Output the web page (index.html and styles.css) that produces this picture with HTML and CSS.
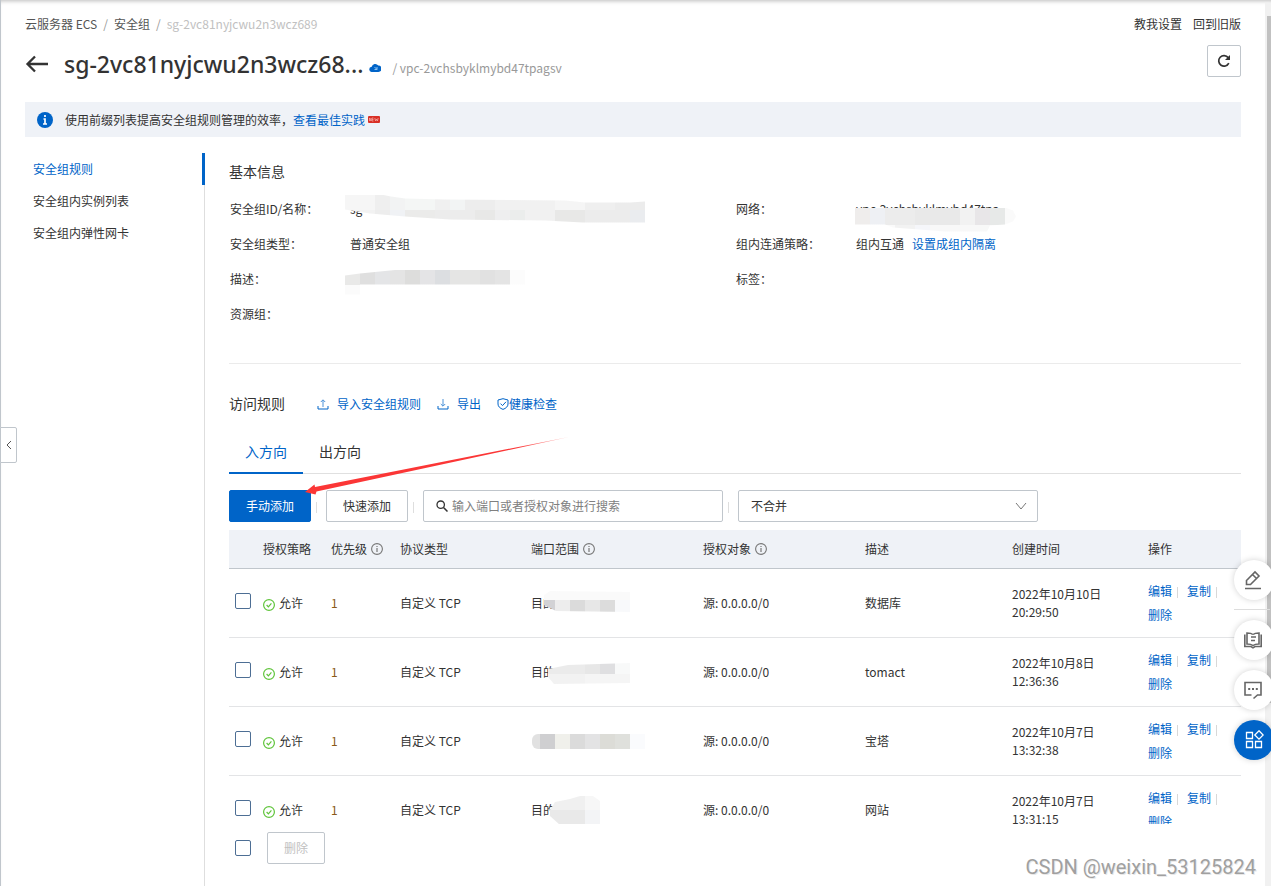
FILE: index.html
```html
<!DOCTYPE html>
<html lang="zh-CN">
<head>
<meta charset="utf-8">
<title>安全组规则</title>
<link rel="stylesheet" href="styles.css">
</head>
<body>
<svg class="sprite" aria-hidden="true">
  <symbol id="info" viewBox="0 0 12 12"><circle cx="6" cy="6" r="5.4" fill="none" stroke="#777" stroke-width="1.1"/><path d="M6 5v4M6 2.9v1.2" stroke="#777" stroke-width="1.2"/></symbol>
  <symbol id="ok" viewBox="0 0 12 12"><circle cx="6" cy="6" r="5.4" fill="none" stroke="#5fc43a" stroke-width="1.2"/><path d="M3.6 6l1.8 1.9 3-3.5" fill="none" stroke="#5fc43a" stroke-width="1.2"/></symbol>
</svg>
<div class="app">
  <header class="top">
    <nav class="crumbs" aria-label="路径">
      <a href="#">云服务器 ECS</a><span class="slash">/</span><a href="#">安全组</a><span class="slash">/</span><span class="current">sg-2vc81nyjcwu2n3wcz689</span>
    </nav>
    <div class="top-links"><a href="#">教我设置</a><a href="#">回到旧版</a></div>
  </header>
  <div class="title-row">
    <a class="back" href="#" aria-label="返回"><svg width="24" height="18" viewBox="0 0 24 18"><path d="M23 9H3M10 1.500L2.500 9l7.500 7.500" fill="none" stroke="#333" stroke-width="2.300"/></svg></a>
    <h1>sg-2vc81nyjcwu2n3wcz68...</h1>
    <svg class="cloud" width="12" height="9" viewBox="0 0 12 9"><path d="M3 9a2.600 2.600 0 0 1-.3-5.200A3.600 3.600 0 0 1 9.200 2.600 3.200 3.200 0 0 1 9.400 9z" fill="#0064c8"/><path d="M5.500 4l2.500 2.500M8 4v2.500H5.500" stroke="#8fc4f2" fill="none"/></svg>
    <span class="vpc">/ vpc-2vchsbyklmybd47tpagsv</span>
    <button class="refresh" type="button" aria-label="刷新"><svg width="14" height="14" viewBox="0 0 14 14"><path d="M11.800 9.200A5.300 5.300 0 1 1 11.200 3.600" fill="none" stroke="#333" stroke-width="1.700"/><path d="M13 1v5H8z" fill="#333"/></svg></button>
  </div>
  <div class="notice">
    <svg width="16" height="16" viewBox="0 0 16 16"><circle cx="8" cy="8" r="8" fill="#0064c8"/><path d="M8 3v2M6.500 7H8v5M6 12h4" fill="none" stroke="#fff" stroke-width="1.700"/></svg>
    <p>使用前缀列表提高安全组规则管理的效率，<a href="#">查看最佳实践</a></p>
    <svg class="new" width="12" height="7" viewBox="0 0 12 7"><rect width="12" height="7" rx="1" fill="#d93026"/><path d="M1.500 5V2l1.500 3V2M5.500 2H4v3h1.500M4 3.500h1.500M6.800 2l.8 3 .9-2 .9 2 .8-3" fill="none" stroke="#f5b5ae" stroke-width=".7"/></svg>
  </div>
  <div class="body">
    <nav class="side" aria-label="安全组">
      <a class="active" href="#">安全组规则</a>
      <a href="#">安全组内实例列表</a>
      <a href="#">安全组内弹性网卡</a>
    </nav>
    <main>
      <h2 class="info-title">基本信息</h2>
      <dl class="info">
        <div><dt>安全组ID/名称：</dt><dd class="covered">sg<i class="mask mask-id"></i></dd></div>
        <div><dt>网络：</dt><dd class="covered">vpc-2vchsbyklmybd47tpa<i class="mask mask-net"></i></dd></div>
        <div><dt>安全组类型：</dt><dd>普通安全组</dd></div>
        <div><dt>组内连通策略：</dt><dd>组内互通<a class="isolate" href="#">设置成组内隔离</a></dd></div>
        <div><dt>描述：</dt><dd class="covered"><i class="mask mask-desc"></i></dd></div>
        <div><dt>标签：</dt><dd></dd></div>
        <div><dt>资源组：</dt><dd></dd></div>
      </dl>
      <div class="rules-head">
        <h2>访问规则</h2>
        <a class="import" href="#"><svg width="12" height="12" viewBox="0 0 12 12"><path d="M1 8v3h10V8" fill="none" stroke="#0064c8"/><path d="M6 9V2M3.800 4L6 1.800 8.200 4" fill="none" stroke="#4c92d8"/></svg>导入安全组规则</a>
        <a class="export" href="#"><svg width="12" height="12" viewBox="0 0 12 12"><path d="M1 8v3h10V8" fill="none" stroke="#0064c8"/><path d="M6 1v7M3.800 6L6 8.200 8.200 6" fill="none" stroke="#4c92d8"/></svg>导出</a>
        <a class="health" href="#"><svg width="12" height="12" viewBox="0 0 12 12"><path d="M6 .7l5 1.300v4c0 2.500-2 4.300-5 5.400C3 10.300 1 8.500 1 6V2zM3.500 5.600l2 2 3.500-3.800" fill="none" stroke="#0064c8"/></svg>健康检查</a>
      </div>
      <div class="tabs" role="tablist">
        <button type="button" role="tab" aria-selected="true" class="active">入方向</button>
        <button type="button" role="tab" aria-selected="false">出方向</button>
        <svg class="arrow" width="264" height="60" viewBox="0 0 264 60"><defs><linearGradient id="fade"><stop offset="0" stop-color="#fb3636"/><stop offset=".8" stop-color="#fb3636"/><stop offset="1" stop-color="#fb3636" stop-opacity=".4"/></linearGradient></defs><path d="M0 55L9.500 47.500 10 50 264 0 11.500 54.500 10.500 57.500z" fill="url(#fade)"/></svg>
      </div>
      <div class="toolbar">
        <button class="btn primary" type="button">手动添加</button><span class="sep"></span>
        <button class="btn" type="button">快速添加</button><span class="sep"></span>
        <label class="search"><svg width="12" height="12" viewBox="0 0 12 12"><circle cx="4.700" cy="4.700" r="3.700" fill="none" stroke="#333" stroke-width="1.300"/><path d="M7.500 7.500l4 4" stroke="#333" stroke-width="1.500"/></svg><input type="text" placeholder="输入端口或者授权对象进行搜索" aria-label="搜索"></label><span class="sep"></span>
        <label class="merge"><select aria-label="合并方式"><option>不合并</option></select><svg width="12" height="8" viewBox="0 0 12 8"><path d="M1 1l5 6 5-6" fill="none" stroke="#777"/></svg></label>
      </div>
      <div class="table-wrap">
        <table>
          <colgroup><col class="c-check"><col class="c-policy"><col class="c-prio"><col class="c-proto"><col class="c-port"><col class="c-source"><col class="c-desc"><col class="c-time"><col></colgroup>
          <thead><tr><th></th><th>授权策略</th><th>优先级<svg class="i"><use href="#info"/></svg></th><th>协议类型</th><th>端口范围<svg class="i"><use href="#info"/></svg></th><th>授权对象<svg class="i"><use href="#info"/></svg></th><th>描述</th><th>创建时间</th><th>操作</th></tr></thead>
          <tbody>
            <tr><td><input type="checkbox" aria-label="选择数据库"></td><td><svg class="ok"><use href="#ok"/></svg>允许</td><td class="prio">1</td><td>自定义 TCP</td><td><div class="covered">目的<i class="mask mask-p1"></i></div></td><td>源: 0.0.0.0/0</td><td>数据库</td><td class="time">2022年10月10日<br>20:29:50</td><td class="ops"><a href="#">编辑</a><a href="#">复制</a><br><a href="#">删除</a></td></tr>
            <tr><td><input type="checkbox" aria-label="选择tomact"></td><td><svg class="ok"><use href="#ok"/></svg>允许</td><td class="prio">1</td><td>自定义 TCP</td><td><div class="covered">目的<i class="mask mask-p2"></i></div></td><td>源: 0.0.0.0/0</td><td>tomact</td><td class="time">2022年10月8日<br>12:36:36</td><td class="ops"><a href="#">编辑</a><a href="#">复制</a><br><a href="#">删除</a></td></tr>
            <tr><td><input type="checkbox" aria-label="选择宝塔"></td><td><svg class="ok"><use href="#ok"/></svg>允许</td><td class="prio">1</td><td>自定义 TCP</td><td><div class="covered"><i class="mask mask-p3"></i></div></td><td>源: 0.0.0.0/0</td><td>宝塔</td><td class="time">2022年10月7日<br>13:32:38</td><td class="ops"><a href="#">编辑</a><a href="#">复制</a><br><a href="#">删除</a></td></tr>
            <tr><td><input type="checkbox" aria-label="选择网站"></td><td><svg class="ok"><use href="#ok"/></svg>允许</td><td class="prio">1</td><td>自定义 TCP</td><td><div class="covered">目的<i class="mask mask-p4"></i></div></td><td>源: 0.0.0.0/0</td><td>网站</td><td class="time">2022年10月7日<br>13:31:15</td><td class="ops"><a href="#">编辑</a><a href="#">复制</a><br><a href="#">删除</a></td></tr>
          </tbody>
        </table>
      </div>
      <div class="batch"><input type="checkbox" aria-label="全选"><button class="btn" type="button" disabled>删除</button></div>
    </main>
  </div>
</div>
<button class="drawer" type="button" aria-label="展开"><svg width="6" height="10" viewBox="0 0 6 10"><path d="M5 1L1 5l4 4" fill="none" stroke="#555"/></svg></button>
<div class="scroll" aria-hidden="true"><div class="thumb"></div></div>
<aside class="float">
  <button type="button" aria-label="编辑"><svg width="20" height="20" viewBox="0 0 20 20"><path d="M2 18.500h16M3.500 14.500v-4l8.500-8.500 4 4-8.500 8.500zM9.500 4.500l4 4" fill="none" stroke="#666" stroke-width="1.600"/></svg></button>
  <hr>
  <button type="button" aria-label="文档"><svg width="20" height="20" viewBox="0 0 20 20"><path d="M10 4.500C8.500 3.200 6.500 3 4 3v11c2.500 0 4.500.3 6 1.500 1.500-1.200 3.500-1.500 6-1.500V3c-2.500 0-4.500.2-6 1.500M1.800 4.500v12h6.200l2 1.300 2-1.300h6.200v-12M8 7h5M8 10.500h4" fill="none" stroke="#666" stroke-width="1.600"/></svg></button>
  <button type="button" aria-label="反馈"><svg width="20" height="20" viewBox="0 0 20 20"><path d="M8.500 15H2V2.500h16V15h-3.500l-4 3.500" fill="none" stroke="#666" stroke-width="1.600"/><path d="M5.200 9h2M9 9h2M12.800 9h2" stroke="#666" stroke-width="2"/></svg></button>
  <button class="blue" type="button" aria-label="应用"><svg width="20" height="20" viewBox="0 0 20 20"><path d="M2.500 2.500h6v6h-6zM2.500 11.500h6v6h-6zM11.500 11.500h6v6h-6zM15 .8l4.200 4.200L15 9.200 10.800 5z" fill="none" stroke="#fff" stroke-width="1.300"/></svg></button>
</aside>
<div class="watermark">CSDN @weixin_53125824</div>
</body>
</html>
```
FILE: styles.css
```css
* { box-sizing: border-box; }
body {
  margin: 0;
  overflow: hidden;
  background: #fff;
  color: #333;
  font: 12px/18px "Noto Sans CJK SC", "Noto Sans", sans-serif;
}
a { color: #0064c8; text-decoration: none; }
h1, h2, p, dl, dd { margin: 0; font-weight: 400; }
button, input, select { font: inherit; color: inherit; }
.sprite { position: absolute; width: 0; height: 0; }

.app {
  display: flex;
  flex-direction: column;
  height: 100vh;
  padding: 15px 30px 0 24px;
  border-left: 1px solid #c0c6cc;
  box-shadow: inset 0 4px 4px -3px #bbb;
}
.top { display: flex; justify-content: space-between; }
.crumbs a { color: #555; }
.crumbs .slash { margin: 0 6px; color: #999; }
.crumbs .current { color: #c1c1c1; }
.top-links { display: flex; gap: 11px; }
.top-links a { color: #333; }

.title-row { display: flex; align-items: center; height: 32px; margin-top: 12px; }
.back { display: flex; margin: 6px 15px 0 0; }
.title-row h1 {
  padding-top: 6px;
  font: 500 23px/32px "Noto Sans", "Noto Sans CJK SC", sans-serif;
}
.cloud { margin: 12px 11px 0 6px; }
.vpc { color: #999; margin-top: 14px; }
.refresh {
  display: flex; align-items: center; justify-content: center;
  width: 34px; height: 32px; margin-left: auto; padding: 0;
  background: #fff; border: 1px solid #c0c6cc; border-radius: 2px;
}

.notice {
  display: flex; align-items: center;
  min-height: 35px; margin-top: 25px; padding-left: 12px;
  background: #eff2f7;
}
.notice p { margin-left: 12px; }
.new { margin-left: 3px; }

.body { display: flex; flex: 1; min-height: 0; }
.side { width: 180px; flex: none; margin-top: 16px; border-right: 1px solid #dedede; }
.side a { display: block; padding-left: 8px; line-height: 32px; color: #333; }
.side .active { color: #0064c8; border-right: 3px solid #0064c8; margin-right: -1px; }
main { flex: 1; min-width: 0; display: flex; flex-direction: column; padding: 24px 0 22px 24px; }
h2, .tabs button { font-family: "Noto Sans", "Noto Sans CJK SC", sans-serif; }
h2 { font-size: 14px; line-height: 22px; }

.info {
  display: grid; grid-template-columns: 1fr 1fr;
  margin-top: 8px; padding-bottom: 32px;
  border-bottom: 1px solid #ebebeb;
}
.info > div { display: flex; height: 35px; align-items: center; }
.info dt { width: 121px; flex: none; padding-left: 1px; }
.covered { position: relative; min-height: 18px; }
.isolate { margin-left: 8px; }
.mask { position: absolute; background-repeat: no-repeat; }
.mask-id {
  left: -5px; top: -5px; width: 300px; height: 28px;
  background-image:
    linear-gradient(90deg, #f6f6f6 30px, #efefef 0 45px, #f2f3f3 0 60px, #f4f6f5 0 90px, #f0f0f0 0 105px, #f2f4f4 0 120px, #ededed 0 150px, #f1f1f1 0 210px, #f5f5f5 0 240px, #efefef 0 270px, #ececec 0),
    linear-gradient(90deg, #f2f2f2 30px, #ededed 0 45px, #f0f2f5 0 60px, #ebebea 0 90px, #ececec 0 130px, #e8e8e7 0 150px, #eeeeef 0 165px, #ebedec 0 180px, #f1f1f1 0 210px, #e8e8e7 0 240px, #ececec 0 285px, #eaecef 0);
  background-size: 100% 15px, 100% 13px;
  background-position: 0 0, 0 15px;
  clip-path: polygon(0 0, 36px 0, 46px 2px, 60px 4px, 100px 5px, 220px 6px, 240px 8px, 285px 8px, 300px 7px, 300px 28px, 238px 28px, 200px 26px, 105px 25px, 60px 22px, 25px 19px, 0 15px);
}
.mask-net {
  left: -1px; top: 8px; width: 161px; height: 24px;
  background-image:
    linear-gradient(90deg, #efedec 15px, #eef0f4 0 30px, #ececec 0 60px, #e9e9e9 0 105px, #f2f2f2 0 120px, #e8e6e8 0 135px, #e7e9e8 0 150px, #fafafa 0),
    linear-gradient(90deg, #fafafa 40px, #f2f2f2 0 60px, #f5f6fa 0 75px, #f8f8f8 0);
  background-size: 100% 17px, 100% 7px;
  background-position: 0 0, 0 17px;
  clip-path: polygon(0 0, 150px 0, 158px 3px, 161px 9px, 158px 14px, 150px 17px, 135px 18px, 132px 24px, 90px 24px, 38px 20px, 30px 17px, 0 17px);
}
.mask-desc {
  left: -5px; top: 0; width: 180px; height: 25px;
  background-image:
    linear-gradient(90deg, #e9e9e8 15px, #dfdfdf 0 30px, #e4e5e7 0 45px, #e4e4e4 0 60px, #dddddc 0 75px, #e4e4e6 0 90px, #dcdee1 0 105px, #e5e5e4 0 135px, #e1e1e1 0 150px, #e4e4e4 0 165px, #fcfcfc 0),
    linear-gradient(90deg, #fbfbfb 15px, #fff 0);
  background-size: 100% 15px, 100% 10px;
  background-position: 0 0, 0 15px;
  clip-path: polygon(0 6px, 15px 4px, 55px 0, 180px 0, 180px 15px, 15px 15px, 15px 25px, 0 25px);
}
.mask-p1 {
  left: 13px; top: -3px; width: 86px; height: 21px;
  background-image: linear-gradient(#fafafa, #fafafa), linear-gradient(90deg, #d2d2d5 11px, #ededed 0 26px, #dbdbdb 0 41px, #e7e7e7 0 56px, #dcdcdc 0 71px, #f8f9fb 0);
  background-size: 100% 9px, 100% 12px;
  background-position: 0 0, 0 9px;
  clip-path: polygon(0 4px, 6px 0, 86px 1px, 86px 21px, 12px 20px, 0 14px);
}
.mask-p2 {
  left: 17px; top: 0; width: 82px; height: 21px;
  background-image: linear-gradient(90deg, #ebebeb 37px, #e7e7e7 0 52px, #dfdfe1 0 67px, #f8f9f9 0), linear-gradient(90deg, #f2f2f2 37px, #f5f5f5 0);
  background-size: 100% 11px, 100% 10px;
  background-position: 0 0, 0 11px;
  clip-path: polygon(0 6px, 20px 2px, 82px 0, 82px 20px, 6px 21px, 0 14px);
}
.mask-p3 {
  left: 1px; top: 2px; width: 113px; height: 15px;
  background-image: linear-gradient(90deg, #e1e1e1 8px, #cfcfd1 0 23px, #f0f0eb 0 38px, #dbdbdb 0 53px, #e3e3e4 0 68px, #dcdcd7 0 83px, #dfe0dc 0 98px, #fafbfd 0);
  border-radius: 6px 0 0 6px;
}
.mask-p4 {
  left: 19px; top: -5px; width: 50px; height: 29px;
  background-image: linear-gradient(90deg, #f0f0f0 35px, #f7f7f7 0), linear-gradient(90deg, #e9e9e9 35px, #f3f4f6 0);
  background-size: 100% 14px, 100% 15px;
  background-position: 0 0, 0 14px;
  clip-path: polygon(0 14px, 5px 6px, 20px 3px, 30px 0, 43px 0, 50px 5px, 50px 29px, 10px 29px, 0 20px);
}

.rules-head { display: flex; align-items: center; margin-top: 29px; }
.rules-head a { display: flex; align-items: center; }
.import, .export { gap: 8px; }
.import { margin-left: 32px; }
.export { margin-left: 16px; }
.health { margin-left: 16px; }

.tabs { position: relative; display: flex; margin-top: 17px; border-bottom: 1px solid #e0e0e0; }
.tabs button {
  height: 42px; margin-bottom: -1px; padding: 0 16px;
  border: 0; border-bottom: 2px solid transparent; background: none;
  font-size: 14px;
}
.tabs .active { color: #0064c8; border-color: #0064c8; }
.arrow { position: absolute; left: 76px; top: 5px; z-index: 1; }

.toolbar { display: flex; align-items: center; margin: 16px 0 8px; }
.btn {
  height: 32px; padding: 0 16px;
  background: #fff; border: 1px solid #c0c6cc; border-radius: 2px;
}
.primary { background: #0064c8; border-color: #0064c8; color: #fff; }
.toolbar .btn { width: 82px; padding: 0; }
.sep { width: 1px; height: 11px; margin: 3px 9px 0 5px; background: #dedede; }
.search {
  display: flex; align-items: center; gap: 4px;
  width: 300px; height: 32px; padding-left: 12px;
  border: 1px solid #c0c6cc; border-radius: 2px;
}
.search input { flex: 1; min-width: 0; padding: 0; border: 0; outline: 0; background: none; }
.search input::placeholder { color: #808080; opacity: 1; }
.merge { position: relative; }
.merge select {
  display: block; width: 300px; height: 32px; padding: 0 12px;
  appearance: none; background: #fff; border: 1px solid #c0c6cc; border-radius: 2px;
}
.merge svg { position: absolute; right: 11px; top: 12px; pointer-events: none; }

.table-wrap { flex: 1; min-height: 0; overflow: hidden; }
table { width: 100%; table-layout: fixed; border-collapse: separate; border-spacing: 0; }
.c-check { width: 34px; }
.c-policy { width: 68px; }
.c-prio { width: 69px; }
.c-proto { width: 131px; }
.c-port { width: 172px; }
.c-source { width: 162px; }
.c-desc { width: 147px; }
.c-time { width: 136px; }
th, td { padding: 0; text-align: left; vertical-align: middle; font-weight: 400; white-space: nowrap; }
th { height: 39px; background: #eff2f7; border-bottom: 1px solid #c0c6cc; }
td { height: 69px; border-bottom: 1px solid #e3e4e6; }
.i { width: 12px; height: 12px; margin-left: 4px; vertical-align: -1px; }
.ok { width: 12px; height: 12px; margin-right: 4px; vertical-align: -3px; }
.prio { color: #8a5a18; }
input[type="checkbox"] {
  display: block; appearance: none; width: 16px; height: 16px; margin: 0 0 0 6px;
  border: 1px solid #4d6e94; border-radius: 2px; background: #fff;
}
td input[type="checkbox"] { margin-bottom: 4px; }
.ops { line-height: 24px; }
.ops a:not(:last-child)::after {
  content: ""; display: inline-block; width: 1px; height: 11px;
  margin: 0 9px 0 5px; background: #d8d8d8; vertical-align: -2px;
}
.batch { display: flex; align-items: center; gap: 16px; margin-top: 8px; }
.btn:disabled { width: 58px; color: #c1c1c1; }

.drawer {
  position: absolute; left: 0; top: 427px; width: 17px; height: 36px; padding: 0 0 0 5px;
  display: flex; align-items: center;
  background: #fff; border: 1px solid #c0c6cc; border-radius: 0 2px 2px 0;
}
.scroll { position: absolute; top: 3px; right: 0; bottom: 0; width: 6px; padding: 13px 0 0 2px; background: #f1f1f1; }
.thumb { height: 79%; background: #c1c1c1; }
.float { position: absolute; right: -3px; top: 560px; display: flex; flex-direction: column; gap: 10px; }
.float button {
  display: flex; align-items: center; justify-content: center;
  width: 40px; height: 40px; padding: 0 2px 0 0; border: 0; border-radius: 50%;
  background: #fff; box-shadow: 0 0 6px rgba(0, 0, 0, .18);
}
.float .blue { background: #0064c8; padding: 0; }
.float hr { width: 36px; height: 1px; margin: -1px 0 0; border: 0; background: #ddd; }
.watermark {
  position: absolute; right: 15px; bottom: 7px;
  font: 20px/24px Roboto, sans-serif;
  color: #a0a0a0; text-shadow: 1px 1px 0 #e8e8e8;
}
```
